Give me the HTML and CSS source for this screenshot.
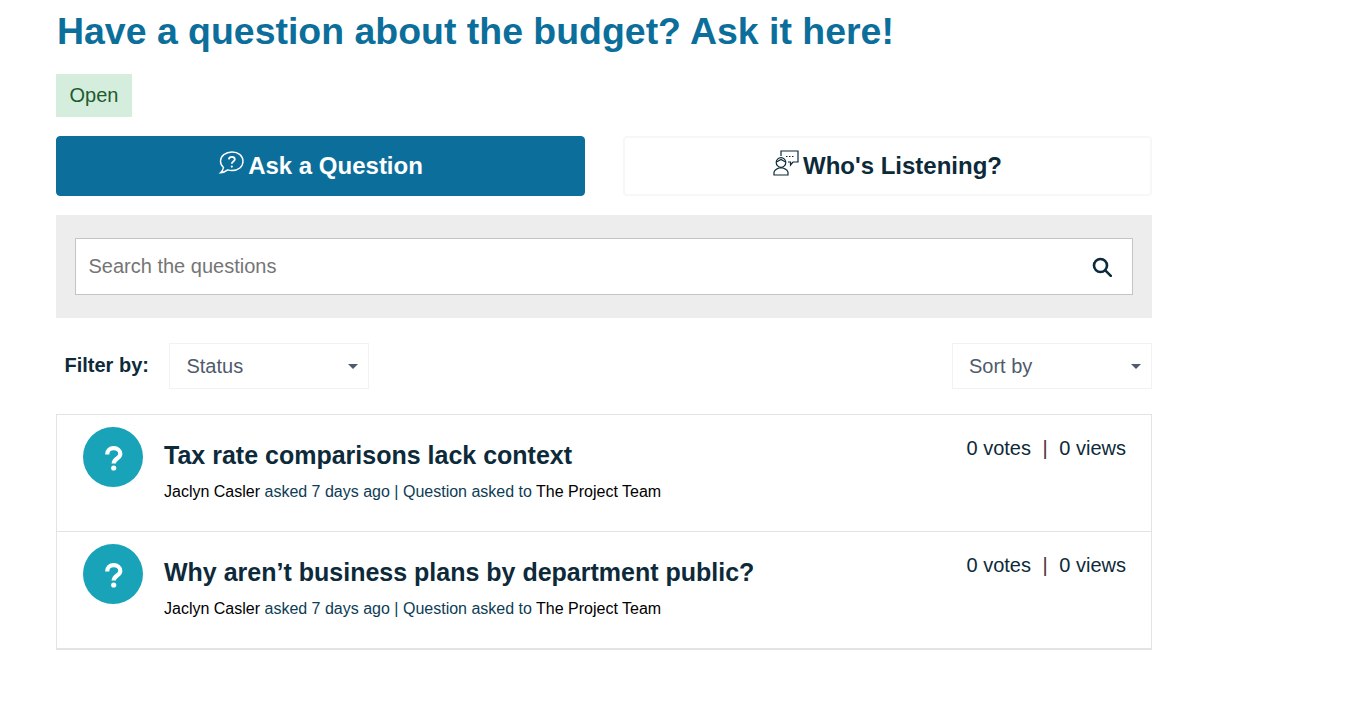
FILE: index.html
```html
<!DOCTYPE html>
<html lang="en">
  <head>
    <meta charset="UTF-8">
    <title>Have a question about the budget? Ask it here!</title>
    <meta name="viewport" content="width=device-width, initial-scale=1">
    <link rel="stylesheet" href="styles.css">
  </head>
  <body>
    <div class="container">
      <h1>Have a question about the budget? Ask it here!</h1>
      <span class="status-badge">Open</span>

      <div class="actions">
        <button type="button" class="action-btn primary">
          <svg class="icon-ask" viewBox="0 0 26 24" width="26" height="24" fill="none" stroke="currentColor" stroke-width="1.4">
            <path d="M14 1c-6.500 0-11.500 4-11.500 9.300 0 2.500 1.100 4.600 3 6.200-.3 2-1.300 3.700-3 5.200 3-.2 5.400-1.300 7.300-2.800 1.300.4 2.700.6 4.200.6 6.300 0 11-3.800 11-9.200S20.500 1 14 1z"/>
            <path d="M10.800 8.400c.2-1.700 1.400-2.600 3-2.600 1.700 0 3 1 3 2.500 0 2.300-3 2.200-3 4.500" stroke-width="1.800"/>
            <circle cx="13.800" cy="15.600" r="1.100" fill="currentColor" stroke="none"/>
          </svg>
          Ask a Question
        </button>
        <button type="button" class="action-btn secondary">
          <svg class="icon-listen" viewBox="0 0 26 26" width="26" height="26" fill="none" stroke="currentColor" stroke-width="1.200">
            <path d="M8 6V1h17v11h-5l-2.500 3v-3H15"/>
            <path d="M13 6.500h1.500M16 6.500h1.500M19 6.500h1.500"/>
            <circle cx="8" cy="12.500" r="4.800"/>
            <path d="M3.500 12l4.500-2.500 4.500 2.500"/>
            <path d="M1 25v-2.500c0-2.500 2.500-3.500 5-4.500h4c2.500 1 5 2 5 4.500V25z"/>
          </svg>
          Who's Listening?
        </button>
      </div>

      <div class="search-panel">
        <div class="search-box">
          <input type="text" placeholder="Search the questions">
          <svg class="icon-search" viewBox="0 0 20 20" width="20" height="20" fill="none" stroke="currentColor" stroke-width="2.600">
            <circle cx="8.500" cy="8.500" r="6.500"/>
            <path d="M13.300 13.300l5.500 5.500" stroke-linecap="round"/>
          </svg>
        </div>
      </div>

      <div class="filters">
        <div class="filter-left">
          <label>Filter by:</label>
          <div class="select-box">Status<span class="caret"></span></div>
        </div>
        <div class="select-box">Sort by<span class="caret"></span></div>
      </div>

      <div class="question-list">
        <div class="question">
          <div class="question-icon">
            <svg viewBox="0 0 60 60" width="60" height="60" fill="none" stroke="white" stroke-width="4.200">
              <path d="M24.200 27.500c0-4 2.700-6.300 6.500-6.300s6.600 2.400 6.600 5.800c0 4.500-6.600 4.500-6.600 9.500"/>
              <circle cx="30.700" cy="41" r="2.600" fill="white" stroke="none"/>
            </svg>
          </div>
          <div class="question-body">
            <h3>Tax rate comparisons lack context</h3>
            <p class="meta"><span class="name">Jaclyn Casler</span> asked 7 days ago | Question asked to <span class="name">The Project Team</span></p>
          </div>
          <div class="stats">0 votes <span class="sep">|</span> 0 views</div>
        </div>
        <div class="question">
          <div class="question-icon">
            <svg viewBox="0 0 60 60" width="60" height="60" fill="none" stroke="white" stroke-width="4.200">
              <path d="M24.200 27.500c0-4 2.700-6.300 6.500-6.300s6.600 2.400 6.600 5.800c0 4.500-6.600 4.500-6.600 9.500"/>
              <circle cx="30.700" cy="41" r="2.600" fill="white" stroke="none"/>
            </svg>
          </div>
          <div class="question-body">
            <h3>Why aren’t business plans by department public?</h3>
            <p class="meta"><span class="name">Jaclyn Casler</span> asked 7 days ago | Question asked to <span class="name">The Project Team</span></p>
          </div>
          <div class="stats">0 votes <span class="sep">|</span> 0 views</div>
        </div>
      </div>
    </div>
  </body>
</html>
```

FILE: styles.css
```css
* {
  box-sizing: border-box;
}

body {
  margin: 0;
  background: white;
  font-family: "Liberation Sans", Arial, sans-serif;
  color: #0d2a3a;
}

.container {
  width: 1096px;
  margin-left: 56px;
  padding-top: 9px;
}

h1 {
  margin: 0 0 21px 1px;
  font-size: 37.45px;
  line-height: 44px;
  font-weight: bold;
  color: #0c6f9b;
}

.status-badge {
  display: block;
  width: 76px;
  height: 43px;
  line-height: 43px;
  text-align: center;
  font-size: 20px;
  background: #d4eddc;
  color: #1d5c2e;
}

.actions {
  display: flex;
  justify-content: space-between;
  margin-top: 19px;
}

.action-btn {
  display: flex;
  align-items: center;
  justify-content: center;
  gap: 4px;
  width: 529px;
  height: 60px;
  border-radius: 4px;
  font-family: inherit;
  font-size: 24px;
  font-weight: bold;
  cursor: pointer;
}

.action-btn svg {
  margin-top: -7px;
}

.primary {
  background: #0c6f9b;
  border: 1px solid #0c6f9b;
  color: white;
}

.secondary {
  background: white;
  border: 2px solid #f7f7f7;
  color: #0d2a3a;
}

.search-panel {
  margin-top: 19px;
  padding: 23px 19px;
  background: #ededed;
}

.search-box {
  display: flex;
  align-items: center;
  height: 57px;
  padding: 0 20px 0 12.5px;
  background: white;
  border: 1px solid #c4c4c4;
}

.search-box input {
  flex: 1;
  border: none;
  outline: none;
  padding: 0;
  font-family: inherit;
  font-size: 20px;
  color: #0d2a3a;
}

.search-box input::placeholder {
  color: #757575;
}

.icon-search {
  color: #0d2a3a;
}

.filters {
  display: flex;
  justify-content: space-between;
  align-items: center;
  margin-top: 25px;
}

.filter-left {
  display: flex;
  align-items: center;
  gap: 20.5px;
  padding-left: 8.5px;
}

.filter-left label {
  margin-top: -2px;
  font-size: 20px;
  font-weight: bold;
}

.select-box {
  position: relative;
  width: 200px;
  height: 46px;
  line-height: 44px;
  padding-left: 16px;
  font-size: 20px;
  color: #4f5b6b;
  border: 1px solid #f2f2f2;
}

.caret {
  position: absolute;
  right: 10px;
  top: 20px;
  border-left: 5px solid transparent;
  border-right: 5px solid transparent;
  border-top: 5px solid #4f5b6b;
}

.question-list {
  margin-top: 25px;
  border: 1px solid #e3e3e3;
  border-bottom-width: 2px;
}

.question {
  display: flex;
  align-items: flex-start;
  height: 117px;
  padding: 12px 25px 0 26px;
  border-bottom: 1px solid #e3e3e3;
}

.question:last-child {
  height: 116px;
  border-bottom: none;
}

.question-icon {
  width: 60px;
  height: 60px;
  border-radius: 50%;
  background: #18a3b8;
}

.question-icon svg {
  display: block;
}

.question-body {
  flex: 1;
  margin-left: 21px;
}

h3 {
  margin: 12px 0 0;
  font-size: 25px;
  line-height: 32px;
  font-weight: bold;
}

.meta {
  margin: 11px 0 0;
  font-size: 16px;
  line-height: 20px;
  color: #0d3d55;
}

.name {
  color: #000;
}

.stats {
  margin-top: 8px;
  font-size: 20px;
  line-height: 26px;
  white-space: pre;
}

.sep {
  margin: 0 6px;
  color: #4a3038;
}
```
